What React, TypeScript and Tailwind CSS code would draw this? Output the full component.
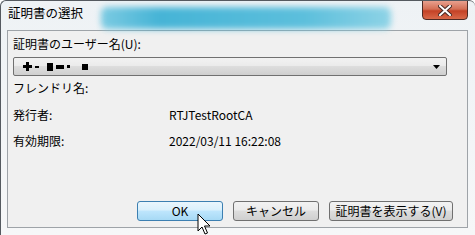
import React from 'react';

const font = { fontFamily: '"Noto Sans CJK JP", "Noto Sans", sans-serif' };

const Redacted = () => (
  <div className="flex items-center gap-[3px] pl-[9px]">
    <span className="relative inline-block h-[3px] w-[9px] bg-black">
      <span className="absolute left-[3px] top-[-3px] h-[9px] w-[3px] bg-black" />
    </span>
    <span className="inline-block h-[2px] w-[4px] bg-black" />
    <span className="ml-[5px] inline-block h-[8px] w-[6px] bg-black" />
    <span className="inline-block h-[4px] w-[8px] bg-black" />
    <span className="inline-block h-[3px] w-[3px] bg-black" />
    <span className="ml-[9px] inline-block h-[6px] w-[6px] bg-black" />
  </div>
);

const Btn = ({ label, w, primary }: { label: string; w: string; primary?: boolean }) => (
  <button
    className={
      'flex h-[20px] items-center justify-center rounded-[3px] border text-[12px] leading-none text-black ' +
      w +
      (primary
        ? ' border-[#3c7fb1] bg-[linear-gradient(#eaf6fd_0%,#d9f0fc_45%,#bee6fd_50%,#a7d9f5_100%)]'
        : ' border-[#707070] bg-[linear-gradient(#f2f2f2_0%,#ebebeb_45%,#dddddd_50%,#cfcfcf_100%)]')
    }
  >
    {label}
  </button>
);

const Row = ({ label, value, className }: { label: string; value?: string; className: string }) => (
  <div className={'flex h-[16px] items-center text-[12px] leading-none text-black ' + className}>
    <span className="w-[156px]">{label}</span>
    {value && <span>{value}</span>}
  </div>
);

export default function App() {
  return (
    <div
      className="relative flex h-[235px] w-[475px] flex-col overflow-hidden rounded-t-[6px] border-l border-t border-[#555a60] bg-[linear-gradient(#eef2f5,#f6f7f8)]"
      style={font}
    >
      <div className="relative flex h-[29px] shrink-0 items-start">
        <div className="absolute left-[100px] top-[6px] h-[22px] w-[290px] rounded-[6px] bg-[linear-gradient(90deg,#7ccbe2,#46b4d6_20%,#5cbfdc_70%,#8ed3e6)] blur-[3px]" />
        <span className="relative pl-[7px] pt-[6px] text-[12.5px] leading-none text-black">証明書の選択</span>
        <div className="absolute right-[7px] top-[-1px] flex h-[20px] w-[46px] items-center justify-center rounded-b-[4px] border border-[#4d2a24] bg-[linear-gradient(#e8a08e_0%,#d46f55_45%,#c44226_55%,#d9694a_100%)]">
          <svg width="14" height="11" viewBox="0 0 14 11">
            <path d="M2 1 L12 10 M12 1 L2 10" stroke="#4a2a24" strokeWidth="4" strokeLinecap="square" />
            <path d="M2 1 L12 10 M12 1 L2 10" stroke="#ffffff" strokeWidth="2" strokeLinecap="square" />
          </svg>
        </div>
      </div>
      <div className="ml-[6px] flex h-[198px] w-[461px] flex-col border border-[#9ea3a8] bg-[#f0f0f0] pl-[5px] pr-[14px]">
        <Row label="証明書のユーザー名(U):" className="mt-[5px]" />
        <div className="mt-[5px] flex h-[19px] w-[434px] items-center justify-between rounded-[2px] border border-[#707070] bg-[linear-gradient(#f2f2f2_0%,#ebebeb_45%,#dddddd_50%,#cfcfcf_100%)] pr-[6px]">
          <Redacted />
          <svg width="7" height="4" viewBox="0 0 7 4">
            <path d="M0 0 H7 L3.5 4 Z" fill="#000" />
          </svg>
        </div>
        <Row label="フレンドリ名:" className="mt-[4px]" />
        <Row label="発行者:" value="RTJTestRootCA" className="mt-[11px]" />
        <Row label="有効期限:" value="2022/03/11 16:22:08" className="mt-[10px]" />
        <div className="mt-[52px] flex justify-end gap-[10px]">
          <Btn label="OK" w="w-[86px]" primary />
          <Btn label="キャンセル" w="w-[86px]" />
          <Btn label="証明書を表示する(V)" w="w-[124px]" />
        </div>
      </div>
      <svg className="absolute left-[196px] top-[212px]" width="14" height="23" viewBox="0 0 14 23">
        <path d="M1 1 V18 L5 14 L8 21 L10.5 20 L7.5 13 H13 Z" fill="#fff" stroke="#000" strokeWidth="1" strokeLinejoin="round" />
      </svg>
    </div>
  );
}
